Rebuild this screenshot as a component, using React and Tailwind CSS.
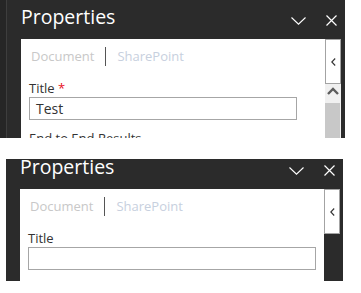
import React from 'react';

const font = { fontFamily: '"Open Sans", "Noto Sans", sans-serif' };

const ChevronDown = () => (
  <svg width="15" height="8" viewBox="0 0 15 8" fill="none">
    <polyline points="0.5,0.5 7.5,7.2 14.5,0.5" stroke="#ffffff" strokeWidth="1.1" />
  </svg>
);

const CloseIcon = () => (
  <svg width="11" height="11" viewBox="0 0 11 11" fill="none">
    <path d="M0.5 0.5 L10.5 10.5 M10.5 0.5 L0.5 10.5" stroke="#ffffff" strokeWidth="1.2" />
  </svg>
);

const CollapseTab = ({ h }) => (
  <div className={`w-[16px] ${h} bg-white border border-[#a3a3a3] flex items-center justify-center`}>
    <svg width="5" height="8" viewBox="0 0 5 8" fill="none">
      <polyline points="4.2,0.5 0.8,4 4.2,7.5" stroke="#333333" strokeWidth="1.1" />
    </svg>
  </div>
);

const Panel = ({ header, width, padLeft, inputW, value, required, scroll, bodyH, edge }) => (
  <div className={`flex flex-col bg-[#2b2b2b] ${width} ${bodyH}`}>
    {/* header */}
    <div className={`flex items-end shrink-0 ${header}`}>
      <span className={`${padLeft} text-[19.5px] leading-[20px] text-white pb-[12px]`} style={font}>
        Properties
      </span>
      <div className="ml-auto flex items-end pb-[14px]">
        <ChevronDown />
      </div>
      <div className="ml-[20px] pb-[13px] pr-[8px]">
        <CloseIcon />
      </div>
    </div>

    {/* body */}
    <div className={`flex flex-1 min-h-0 ${padLeft} ${edge}`}>
      <div className="flex-1 bg-white overflow-hidden" style={font}>
        <div className="flex items-center pl-[10px] pt-[7px] h-[27px]">
          <span className="text-[13px] text-[#c8c8c8] leading-none">Document</span>
          <span className="mx-[11px] w-px h-[19px] bg-[#555555]" />
          <span className="text-[13px] text-[#c7d0de] leading-none">SharePoint</span>
        </div>
        <div className="pl-[8px] pt-[15px]">
          <div className="text-[13px] leading-[14px] text-[#333333]">
            Title{required && <span className="text-[#e81123]"> *</span>}
          </div>
          <div className={`mt-[2px] ${inputW} h-[23px] border border-[#a6a6a6] flex items-center pl-[6px] text-[14px] text-[#333333]`}>
            {value}
          </div>
          {scroll && (
            <div className="mt-[11px] text-[13px] leading-[14px] text-[#333333]">End to End Results</div>
          )}
        </div>
      </div>
      <div className="w-[16px] flex flex-col shrink-0">
        {scroll ? (
          <>
            <CollapseTab h="h-[45px]" />
            <div className="flex-1 bg-[#f0f0f0] flex flex-col items-center">
              <svg className="mt-[3px]" width="12" height="8" viewBox="0 0 12 8" fill="none">
                <polyline points="1,7 6,2 11,7" stroke="#5c5c5c" strokeWidth="2.4" />
              </svg>
              <div className="mt-[8px] w-[15px] flex-1 bg-[#c8c8c8] self-start" />
            </div>
          </>
        ) : (
          <CollapseTab h="h-[45px]" />
        )}
      </div>
    </div>
  </div>
);

export default function App() {
  return (
    <div className="w-[361px] h-[293px] bg-white overflow-hidden">
      <div className="flex h-[138px]">
        <div className="w-[6px] bg-[#262626]" />
        <div className="w-px bg-[#3e3e3e]" />
        <Panel
          header="h-[39px]"
          width="w-[338px]"
          bodyH="h-[138px]"
          padLeft="pl-[14px]"
          edge="pr-[4px]"
          inputW="w-[268px]"
          value="Test"
          required
          scroll
        />
      </div>
      <div className="h-[21px]" />
      <div className="flex pl-[6px]">
        <Panel
          header="h-[30px]"
          width="w-[337px]"
          bodyH="h-[122px]"
          padLeft="pl-[14px]"
          edge="pr-[3px]"
          inputW="w-[288px]"
          value=""
          scroll={false}
        />
      </div>
    </div>
  );
}
